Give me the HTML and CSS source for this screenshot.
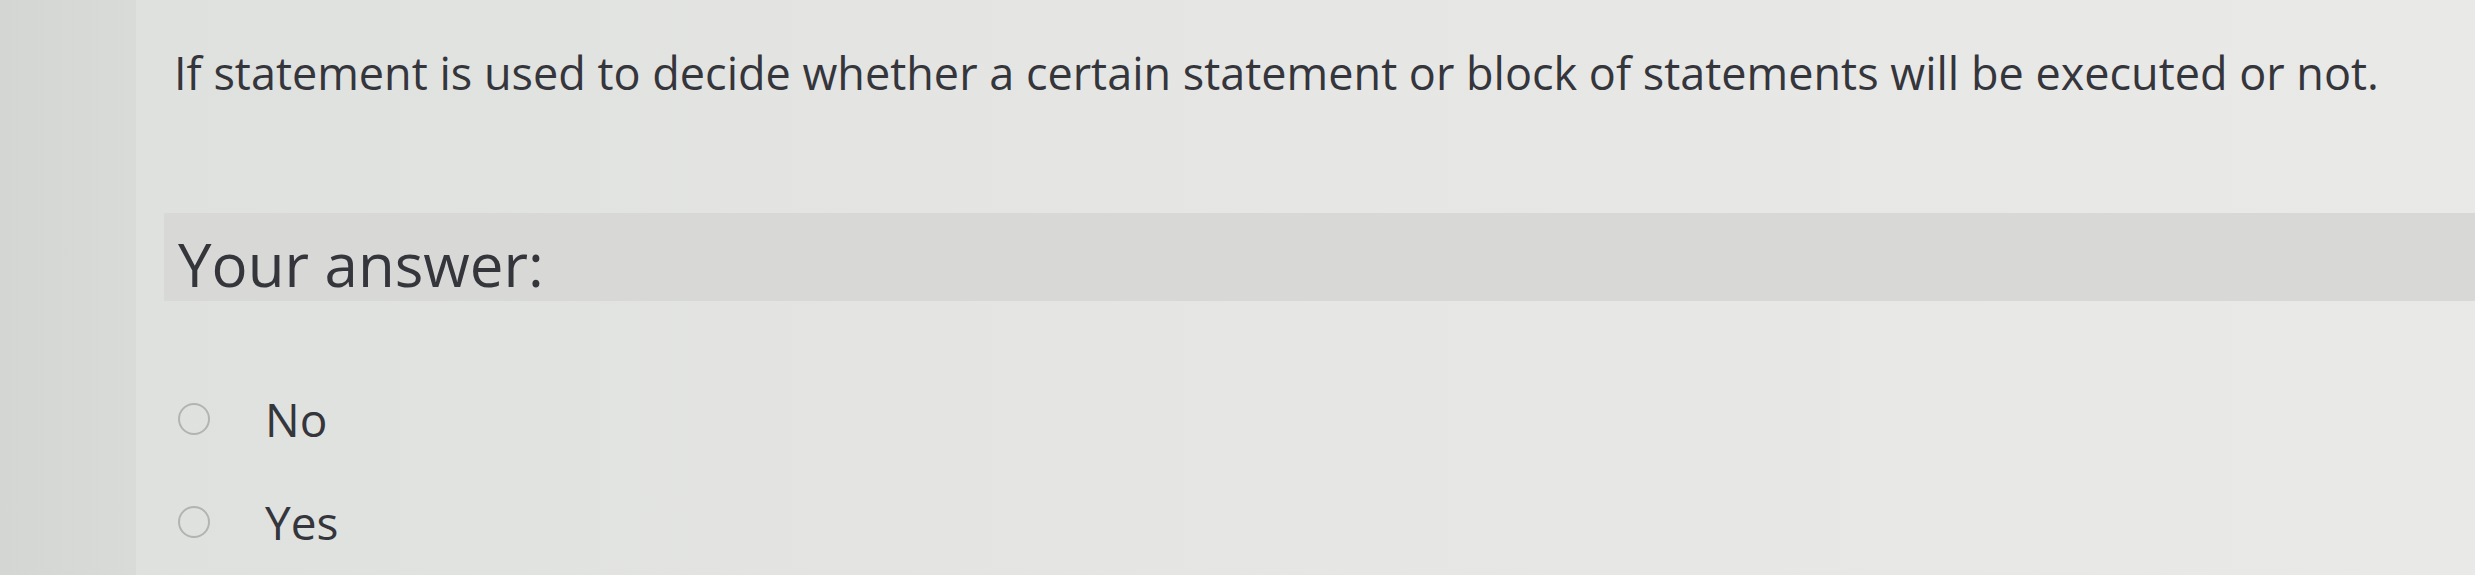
FILE: index.html
```html
<!DOCTYPE html>
<html lang="en">
<head>
  <meta charset="UTF-8">
  <meta name="viewport" content="width=device-width, initial-scale=1.0">
  <title>Quiz Question</title>
  <link rel="stylesheet" href="styles.css">
</head>
<body>

<div class="page">
  <!-- Side rail of the quiz window -->
  <div class="side-rail"></div>

  <div class="question-card">
    <p class="question-text">If statement is used to decide whether a certain statement or block of statements will be executed or not.</p>

    <div class="answer-header">
      <h2 class="answer-title">Your answer:</h2>
    </div>

    <!-- Answer options -->
    <div class="options">
      <label class="option">
        <input type="radio" name="answer" value="no">
        <span class="option-label">No</span>
      </label>
      <label class="option">
        <input type="radio" name="answer" value="yes">
        <span class="option-label">Yes</span>
      </label>
    </div>
  </div>
</div>

</body>
</html>
```

FILE: styles.css
```css
* {
  margin: 0;
  padding: 0;
  box-sizing: border-box;
}
body {
  font-family: 'Open Sans', 'Noto Sans', sans-serif;
  background: #e3e4e1;
  color: #35353c;
  height: 100vh;
  overflow: hidden;
}
.page {
  display: flex;
  height: 100%;
}
.side-rail {
  width: 136px;
  flex-shrink: 0;
  background: linear-gradient(to right, #d3d6d3, #d9dbd8);
}
.question-card {
  flex: 1;
  padding-left: 28px;
  background: linear-gradient(to right, #dfe1de, #e6e7e4 50%, #e9e9e7);
}
.question-text {
  font-size: 45px;
  margin-top: 42px;
  padding-left: 10px;
  white-space: nowrap;
}
/* Grey strip behind the "Your answer" heading */
.answer-header {
  background-color: #d8d9d6;
  margin-top: 110px;
  height: 88px;
  padding: 21px 0 0 14px;
}
.answer-title {
  font-size: 60px;
  font-weight: normal;
  line-height: 1;
}
.options {
  display: flex;
  flex-direction: column;
  gap: 57px;
  margin-top: 95px;
  padding-left: 14px;
}
.option {
  display: flex;
  align-items: center;
  cursor: pointer;
}
.option input[type="radio"] {
  appearance: none;
  width: 32px;
  height: 32px;
  border: 2px solid #b3b4b1;
  border-radius: 50%;
  background: transparent;
  margin-right: 55px;
}
.option-label {
  font-size: 46px;
  line-height: 1;
}
```
